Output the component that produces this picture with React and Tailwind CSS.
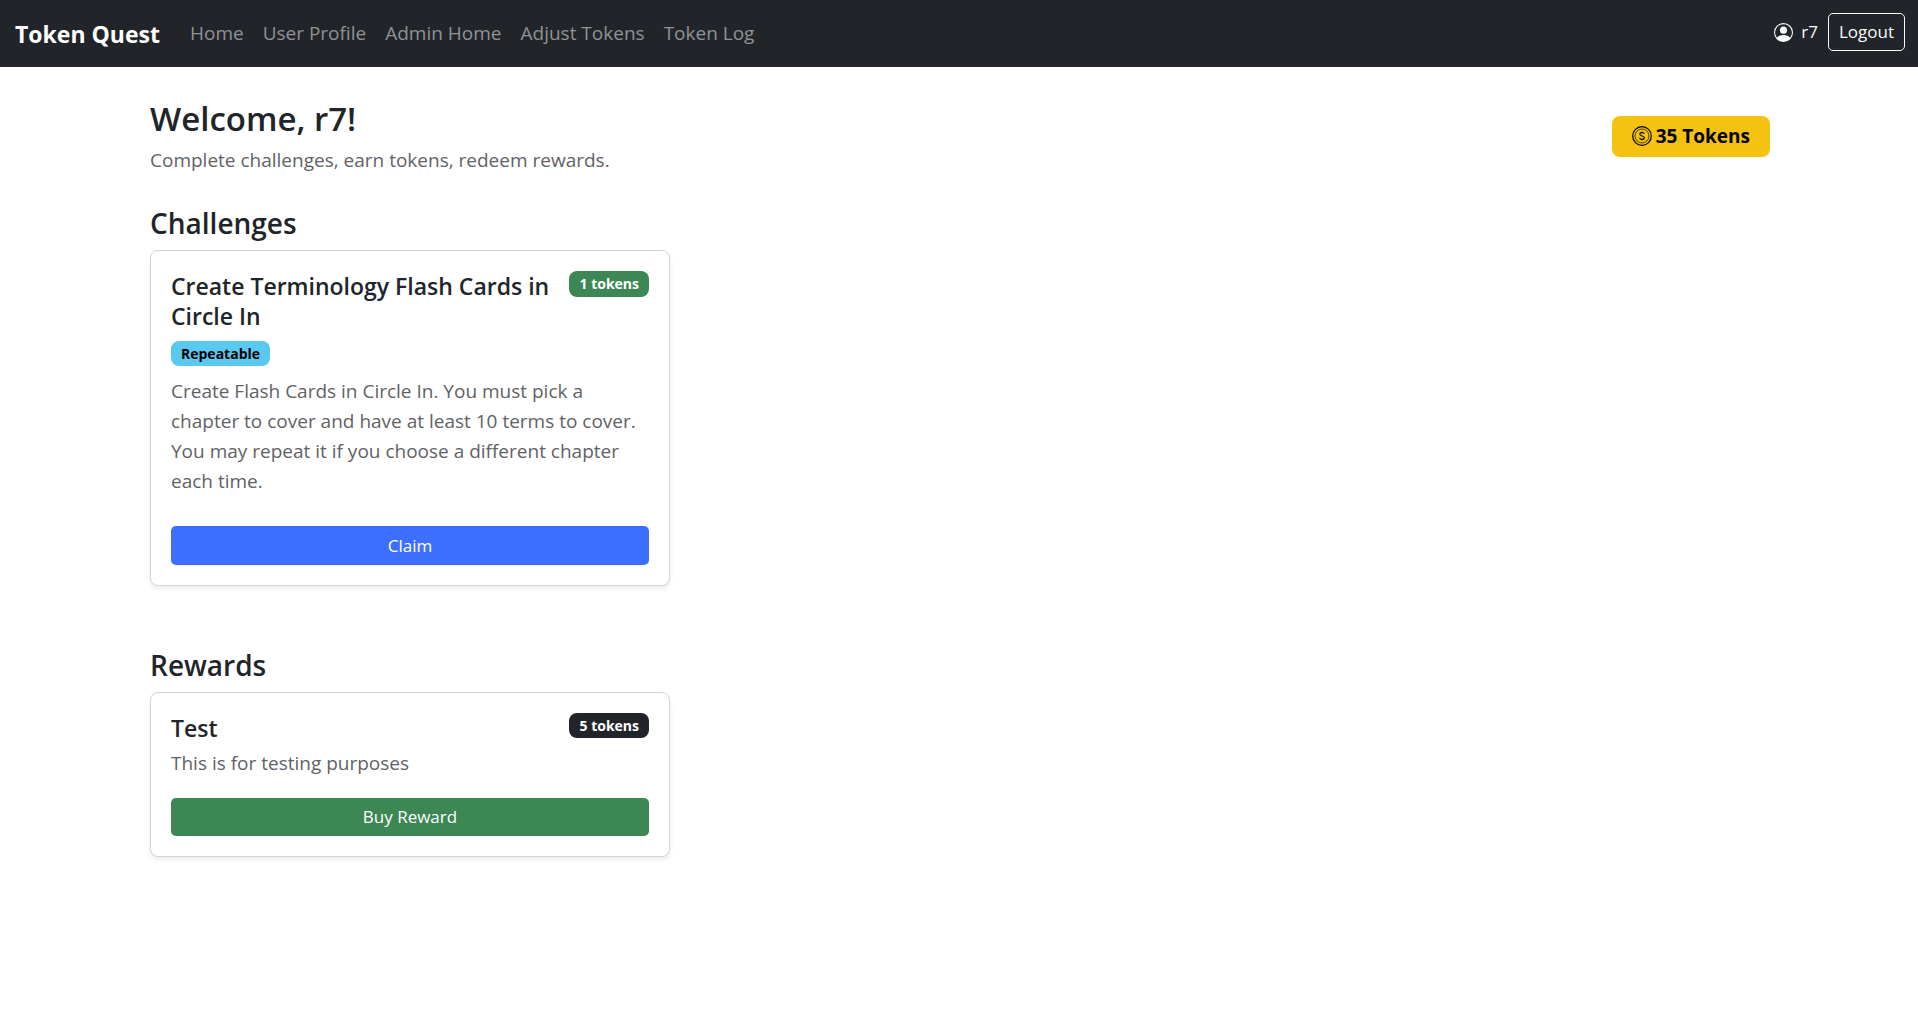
import React from 'react';
import { BsPersonCircle } from 'react-icons/bs';

const navLinks = ['Home', 'User Profile', 'Admin Home', 'Adjust Tokens', 'Token Log'];

const challenges = [
  {
    title: 'Create Terminology Flash Cards in Circle In',
    tokens: 1,
    repeatable: true,
    description:
      'Create Flash Cards in Circle In. You must pick a chapter to cover and have at least 10 terms to cover. You may repeat it if you choose a different chapter each time.',
  },
];

const rewards = [
  { title: 'Test', tokens: 5, description: 'This is for testing purposes' },
];

const CoinIcon = () => (
  <svg viewBox="0 0 20 20" className="w-5 h-5" fill="none" stroke="currentColor" aria-hidden="true">
    <circle cx="10" cy="10" r="9.3" strokeWidth="1.2" />
    <circle cx="10" cy="10" r="7" strokeWidth="0.7" />
    <path
      d="M12.3 7.9C12 7 11.2 6.6 10 6.6c-1.3 0-2.2.6-2.2 1.6 0 2.3 4.6 1.2 4.6 3.5 0 1.1-1 1.7-2.4 1.7-1.3 0-2.2-.5-2.5-1.500M10 5.400v1.200M10 13.400v1.200"
      strokeWidth="1.1"
    />
  </svg>
);

const Navbar = () => (
  <nav className="bg-[#212529] min-h-[67px] px-[15px] flex items-center justify-between">
    <div className="flex items-center gap-[30px]">
      <a href="#" className="text-[23px] leading-8 font-bold text-white">Token Quest</a>
      <ul className="flex items-center gap-[19px]">
        {navLinks.map((link) => (
          <li key={link}>
            <a href="#" className="text-[19px] text-[#909294] hover:text-white">{link}</a>
          </li>
        ))}
      </ul>
    </div>
    <div className="flex items-center gap-2.5 pb-[3px] -mr-0.5">
      <div className="flex items-center gap-2">
        <BsPersonCircle className="w-[19px] h-[19px] text-[#f8f9fa]" />
        <span className="text-[17px] text-[#f8f9fa]">r7</span>
      </div>
      <button
        type="button"
        className="h-[38px] px-2.5 text-[17px] text-[#f8f9fa] border border-[#f8f9fa] rounded-[5px]"
      >
        Logout
      </button>
    </div>
  </nav>
);

const ChallengeCard = ({ challenge }) => (
  <div className="p-5 border border-[#d3d4d5] rounded-lg bg-white shadow-[0_3px_5px_rgba(0,0,0,0.075)]">
    <div className="flex items-start justify-between">
      <h3 className="text-[23px] leading-[30px] font-semibold">{challenge.title}</h3>
      <span className="shrink-0 h-[26px] px-2.5 leading-[26px] text-[14px] font-bold text-white bg-[#3c8754] rounded-lg">
        {challenge.tokens} tokens
      </span>
    </div>
    {challenge.repeatable && (
      <div className="mt-2.5 flex">
        <span className="h-[25px] px-2.5 leading-[25px] text-[14px] font-bold text-black bg-[#5bc8f0] rounded-lg">
          Repeatable
        </span>
      </div>
    )}
    <p className="mt-2.5 text-[19px] leading-[30px] text-[#5f6266]">{challenge.description}</p>
    <button type="button" className="mt-[30px] w-full h-[39px] text-[17px] text-white bg-[#3d6fff] rounded-[5px]">
      Claim
    </button>
  </div>
);

const RewardCard = ({ reward }) => (
  <div className="p-5 border border-[#d3d4d5] rounded-lg bg-white shadow-[0_3px_5px_rgba(0,0,0,0.075)]">
    <div className="flex items-start justify-between">
      <h3 className="text-[23px] leading-[30px] font-semibold">{reward.title}</h3>
      <span className="shrink-0 h-[25px] px-2.5 leading-[25px] text-[14px] font-bold text-white bg-[#212529] rounded-lg">
        {reward.tokens} tokens
      </span>
    </div>
    <p className="mt-[5px] text-[19px] leading-[30px] text-[#5f6266]">{reward.description}</p>
    <button type="button" className="mt-5 w-full h-[38px] text-[17px] text-white bg-[#3c8754] rounded-[5px]">
      Buy Reward
    </button>
  </div>
);

const App = () => {
  return (
    <div className="min-h-screen bg-white text-[#212529] font-['Open_Sans',sans-serif]">
      <Navbar />
      <main className="max-w-[1650px] mx-auto pl-4 pr-3.5 py-[30px]">
        <header className="flex items-center justify-between">
          <div>
            <h1 className="text-[33px] leading-[44px] font-semibold">Welcome, r7!</h1>
            <p className="mt-1 text-[19px] leading-[30px] text-[#5f6266]">
              Complete challenges, earn tokens, redeem rewards.
            </p>
          </div>
          <div className="h-[41px] px-5 flex items-center gap-1 text-[19px] font-bold text-black bg-[#f5c211] rounded-lg">
            <CoinIcon />
            <span>35 Tokens</span>
          </div>
        </header>

        <section className="mt-[30px]">
          <h2 className="text-[28px] leading-9 font-semibold">Challenges</h2>
          <div className="mt-[9px] grid grid-cols-3 gap-[30px]">
            {challenges.map((challenge) => (
              <ChallengeCard key={challenge.title} challenge={challenge} />
            ))}
          </div>
        </section>

        <section className="mt-[61px]">
          <h2 className="text-[28px] leading-9 font-semibold">Rewards</h2>
          <div className="mt-[9px] grid grid-cols-3 gap-[30px]">
            {rewards.map((reward) => (
              <RewardCard key={reward.title} reward={reward} />
            ))}
          </div>
        </section>
      </main>
    </div>
  );
};

export default App;
